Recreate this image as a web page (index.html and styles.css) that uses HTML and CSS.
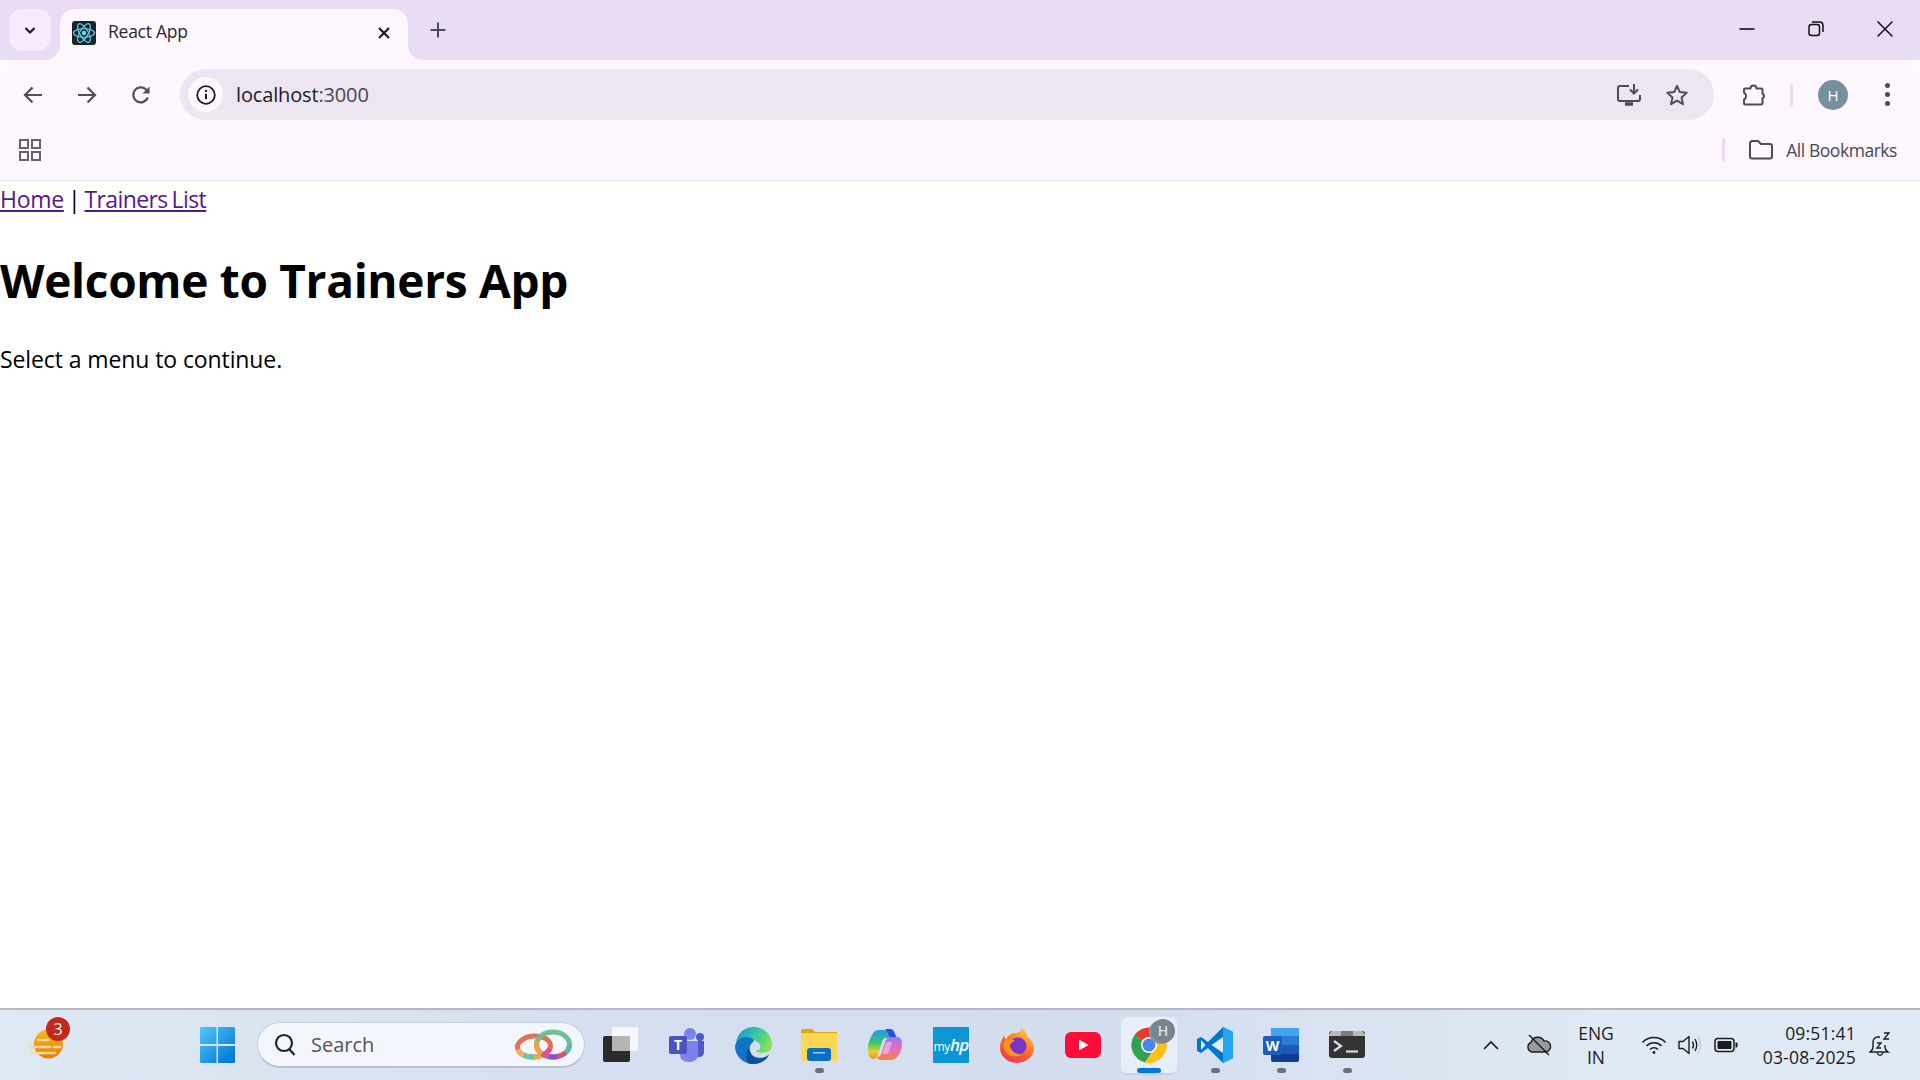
FILE: index.html
```html
<!DOCTYPE html>
<html lang="en">
<head>
    <meta charset="UTF-8">
    <title>React App</title>
    <link rel="stylesheet" href="styles.css">
</head>
<body>
    <div class="tabstrip">
        <div class="tab-menu">
            <svg width="14" height="14" viewBox="0 0 14 14"><path d="M2.5 5l4.5 4.5L11.500 5" fill="none" stroke="#1f1b24" stroke-width="2.200"/></svg>
        </div>
        <div class="tab">
            <svg class="favicon" width="24" height="24" viewBox="0 0 24 24">
                <rect width="24" height="24" rx="3" fill="#20232a"/>
                <circle cx="12" cy="12" r="2.200" fill="#61dafb"/>
                <g fill="none" stroke="#61dafb" stroke-width="1.100">
                    <ellipse cx="12" cy="12" rx="10.500" ry="4.200"/>
                    <ellipse cx="12" cy="12" rx="10.500" ry="4.200" transform="rotate(60 12 12)"/>
                    <ellipse cx="12" cy="12" rx="10.500" ry="4.200" transform="rotate(120 12 12)"/>
                </g>
            </svg>
            <span class="tab-title">React App</span>
            <svg class="tab-close" width="14" height="14" viewBox="0 0 14 14"><path d="M2 2l10 10M12 2L2 12" stroke="#1f1b24" stroke-width="2.200"/></svg>
        </div>
        <svg class="new-tab" width="18" height="18" viewBox="0 0 18 18"><path d="M9 1.500v15M1.500 9h15" stroke="#4f4a57" stroke-width="2"/></svg>
        <div class="win-controls">
            <svg width="16" height="16" viewBox="0 0 16 16"><path d="M0.500 8h15" stroke="#111" stroke-width="1.600"/></svg>
            <svg width="16" height="16" viewBox="0 0 16 16" fill="none" stroke="#111" stroke-width="1.500"><rect x="1" y="3.500" width="10.500" height="11" rx="2.500"/><path d="M4 1h7.500Q15 1 15 4.500V11"/></svg>
            <svg width="16" height="16" viewBox="0 0 16 16"><path d="M0.500 0.500l15 15M15.500 0.500l-15 15" stroke="#111" stroke-width="1.500"/></svg>
        </div>
    </div>

    <div class="chrome">
        <div class="toolbar">
            <svg class="nav-btn" width="20" height="20" viewBox="0 0 20 20"><path d="M19 10H2M9.500 2.500L2 10l7.500 7.500" fill="none" stroke="#544e5c" stroke-width="2.200"/></svg>
            <svg class="nav-btn" width="20" height="20" viewBox="0 0 20 20"><path d="M1 10h17M10.500 2.500L18 10l-7.500 7.500" fill="none" stroke="#544e5c" stroke-width="2.200"/></svg>
            <svg class="nav-btn" width="20" height="20" viewBox="0 0 20 20"><path d="M16.800 12.500A7.500 7.500 0 1 1 15 4.500L18 7" fill="none" stroke="#544e5c" stroke-width="2.200"/><path d="M18.500 1.500v7h-7z" fill="#544e5c"/></svg>
            <div class="omnibox">
                <div class="site-info">
                    <svg width="20" height="20" viewBox="0 0 20 20"><circle cx="10" cy="10" r="8.800" fill="none" stroke="#1f1b24" stroke-width="1.800"/><path d="M10 8.800v5.500" stroke="#1f1b24" stroke-width="2"/><circle cx="10" cy="5.900" r="1.200" fill="#1f1b24"/></svg>
                </div>
                <span class="url">localhost<span class="url-port">:3000</span></span>
                <svg class="omni-icon" width="26" height="24" viewBox="0 0 26 24" fill="none" stroke="#4f4a57" stroke-width="2"><path d="M13 3H4Q2 3 2 5v11q0 2 2 2h18q2 0 2-2v-4"/><path d="M18 1v9M14 6.500l4 4 4-4"/><path d="M9 21h8" stroke-width="3.500"/></svg>
                <svg class="omni-icon" width="24" height="24" viewBox="0 0 24 24"><path d="M12 2.800l2.800 6.300 6.900.7-5.200 4.600 1.500 6.800-6-3.500-6 3.500 1.500-6.800-5.200-4.600 6.900-.7z" fill="none" stroke="#4f4a57" stroke-width="2" stroke-linejoin="round"/></svg>
            </div>
            <svg class="ext-icon" width="24" height="24" viewBox="0 0 24 24"><path d="M3 5.500h5.500a3 3 0 0 1 6 0H19a1.500 1.500 0 0 1 1.500 1.500v4a2.200 2.200 0 0 1 0 4.200V20a1.500 1.500 0 0 1-1.500 1.500H3.500A1.500 1.500 0 0 1 2 20v-3.500a4 4 0 0 0 0-7V6.500A1 1 0 0 1 3 5.500z" fill="none" stroke="#4f4a57" stroke-width="2" stroke-linejoin="round"/></svg>
            <div class="bar-sep"></div>
            <div class="avatar">H</div>
            <div class="menu-dots"><i></i><i></i><i></i></div>
        </div>
        <div class="bookmarks">
            <svg class="apps-icon" width="22" height="22" viewBox="0 0 22 22" fill="none" stroke="#66616d" stroke-width="2"><rect x="1" y="1" width="8" height="8"/><rect x="13" y="1" width="8" height="8"/><rect x="1" y="13" width="8" height="8"/><rect x="13" y="13" width="8" height="8"/></svg>
            <div class="bar-sep"></div>
            <svg class="folder-icon" width="24" height="20" viewBox="0 0 24 20"><path d="M1 3.500Q1 1 3.500 1H9l3 3h9q2 0 2 2v10.500q0 2-2 2H3q-2 0-2-2z" fill="none" stroke="#4f4a57" stroke-width="2"/></svg>
            <span class="all-bookmarks">All Bookmarks</span>
        </div>
    </div>

    <main class="page">
        <nav><a href="#home">Home</a> | <a class="trainers-link" href="#trainers">Trainers List</a></nav>
        <h1>Welcome to Trainers App</h1>
        <p>Select a menu to continue.</p>
    </main>

    <footer class="taskbar">
        <div class="weather">
            <svg width="38" height="44" viewBox="0 0 38 44">
                <defs><linearGradient id="sun" x1="0" y1="0" x2="0" y2="1"><stop offset="0" stop-color="#fdbb1c"/><stop offset="1" stop-color="#ea7a06"/></linearGradient></defs>
                <circle cx="22.500" cy="21" r="14.500" fill="url(#sun)"/>
                <g stroke="#f2dba4" stroke-width="2.600" stroke-linecap="round"><path d="M12 17h10M5 24h19M28 24h6M5 30h24"/></g>
            </svg>
            <span class="weather-badge">3</span>
        </div>

        <div class="task-center">
            <svg class="start-icon" width="35" height="36" viewBox="0 0 35 36">
                <defs><linearGradient id="win" x1="0" y1="0" x2="1" y2="1"><stop offset="0" stop-color="#4cc9fb"/><stop offset="1" stop-color="#0071d2"/></linearGradient></defs>
                <path d="M1 0h15.500v17H0V1zM18 0h16l1 1v16H18zM0 19h16.500v17H1l-1-1zM18 19h17v16l-1 1H18z" fill="url(#win)"/>
            </svg>
            <div class="search-box">
                <svg width="22" height="24" viewBox="0 0 22 24" fill="none" stroke="#222" stroke-width="2.200"><circle cx="10" cy="10" r="8"/><path d="M15.500 16.500l5 5.500"/></svg>
                <span class="search-text">Search</span>
                <svg class="search-art" width="57" height="32" viewBox="0 0 57 32" fill="none" stroke-width="5">
                    <g transform="rotate(-4 19 17.500)">
                        <ellipse cx="19" cy="17.500" rx="16.500" ry="10.500" stroke="#dd7458"/>
                        <ellipse cx="19" cy="17.500" rx="16.500" ry="10.500" pathLength="100" stroke="#e44f9c" stroke-dasharray="12 100" stroke-dashoffset="-4"/>
                        <ellipse cx="19" cy="17.500" rx="16.500" ry="10.500" pathLength="100" stroke="#f5a74d" stroke-dasharray="10 100" stroke-dashoffset="-16"/>
                        <ellipse cx="19" cy="17.500" rx="16.500" ry="10.500" pathLength="100" stroke="#5cc9b0" stroke-dasharray="12 100" stroke-dashoffset="-26"/>
                        <ellipse cx="19" cy="17.500" rx="16.500" ry="10.500" pathLength="100" stroke="#e4b85a" stroke-dasharray="10 100" stroke-dashoffset="-38"/>
                    </g>
                    <ellipse cx="38" cy="15.500" rx="16.500" ry="12.500" stroke="#6fbf9a"/>
                    <ellipse cx="38" cy="15.500" rx="16.500" ry="12.500" pathLength="100" stroke="#54bdae" stroke-dasharray="10 100" stroke-dashoffset="0"/>
                    <ellipse cx="38" cy="15.500" rx="16.500" ry="12.500" pathLength="100" stroke="#d8546a" stroke-dasharray="10 100" stroke-dashoffset="-10"/>
                    <ellipse cx="38" cy="15.500" rx="16.500" ry="12.500" pathLength="100" stroke="#8a4fd0" stroke-dasharray="10 100" stroke-dashoffset="-20"/>
                    <ellipse cx="38" cy="15.500" rx="16.500" ry="12.500" pathLength="100" stroke="#e44f9c" stroke-dasharray="8 100" stroke-dashoffset="-30"/>
                    <ellipse cx="38" cy="15.500" rx="16.500" ry="12.500" pathLength="100" stroke="#f2a044" stroke-dasharray="16 100" stroke-dashoffset="-38"/>
                </svg>
            </div>
            <div class="task-item">
                <svg width="36" height="36" viewBox="0 0 36 36"><rect x="0" y="9" width="27" height="26" rx="2" fill="#2a2a2a"/><rect x="9" y="0" width="26" height="24" rx="1" fill="#f6f7fa"/><rect x="9" y="9" width="18" height="15" fill="#b4b4b4"/></svg>
            </div>
            <div class="task-item">
                <svg width="36" height="34" viewBox="0 0 36 34">
                    <circle cx="21" cy="6" r="6" fill="#7b83eb"/><circle cx="31" cy="9" r="4" fill="#5059c9"/>
                    <path d="M25 13h10v11q0 5-5 5h-5z" fill="#5059c9"/>
                    <path d="M11 13h18v13q0 8-9 8t-9-8z" fill="#7b83eb"/>
                    <rect x="0" y="8" width="18" height="18" rx="2" fill="#4b53bc"/>
                    <text x="9" y="22" class="svg-letter" font-size="14" fill="#fff" text-anchor="middle">T</text>
                </svg>
            </div>
            <div class="task-item">
                <svg width="37" height="37" viewBox="0 0 36 36">
                    <defs><linearGradient id="edge" x1="0" y1="0" x2="1" y2="0.400"><stop offset="0" stop-color="#1a8fd0"/><stop offset="0.500" stop-color="#2fc0b0"/><stop offset="1" stop-color="#7fe05a"/></linearGradient></defs>
                    <path d="M1 15C3 5 10 0 18 0c11 0 18 8 18 17 0 5-4 8-9 8-3 0-6-1-7-2 4 0 6-3 4-6-3-5-12-7-18-5-2 1-4 2-5 3z" fill="url(#edge)"/>
                    <path d="M0 19c1-6 6-10 12-9 6 1 8 3 5 5-4 3-4 11 2 14 5 2 10 1 14-2-3 6-9 9-15 9C8 36 0 28 0 19z" fill="#0f74c8"/>
                    <path d="M14 20c0 6 4 11 10 11 4 0 7-2 9-4-3 6-9 9-15 9-2 0-4 0-6-1-2-5-1-11 2-15z" fill="#0c4f96"/>
                </svg>
            </div>
            <div class="task-item running">
                <svg width="36" height="32" viewBox="0 0 36 32">
                    <path d="M0 1.500Q0 0 1.500 0H11l3 3h22v5H0z" fill="#e0a50c"/>
                    <rect y="4" width="36" height="28" fill="#fed755"/>
                    <rect x="6" y="19" width="24" height="13" rx="3" fill="#0a6fc4"/>
                    <rect x="12" y="23" width="12" height="1.500" fill="#9fd0f5"/>
                </svg>
            </div>
            <div class="task-item">
                <svg width="34" height="32" viewBox="0 0 34 32">
                    <defs>
                        <linearGradient id="cop1" x1="0" y1="0" x2="0" y2="1"><stop offset="0" stop-color="#1f9cf0"/><stop offset="0.450" stop-color="#3fc56b"/><stop offset="0.750" stop-color="#e9d02c"/><stop offset="1" stop-color="#f28a2e"/></linearGradient>
                        <linearGradient id="cop2" x1="0" y1="0" x2="0" y2="1"><stop offset="0" stop-color="#9a78ec"/><stop offset="0.500" stop-color="#e46cc4"/><stop offset="1" stop-color="#f6833e"/></linearGradient>
                    </defs>
                    <path d="M10 1h11q3 0 4 4l1 4h-8q-3 0-4 4l-4 13q-1 4-5 4-5-1-5-10 0-6 2-10l3-6q2-3 5-3z" fill="url(#cop1)"/>
                    <path d="M18 0h5q3 1 4 5l2 4h-7l-2-5q-1-2-3-3z" fill="#2a52d8"/>
                    <path d="M22 8h8q4 1 4 6 0 6-2 10l-3 4q-2 3-5 3H13q-3 0-4-3 3 0 4-3l4-12q1-4 5-5z" fill="url(#cop2)"/>
                    <path d="M18 13h6l-4 12h-6z" fill="#f3e8f6" opacity="0.450"/>
                </svg>
            </div>
            <div class="task-item">
                <div class="myhp">my<em>hp</em></div>
            </div>
            <div class="task-item">
                <svg width="34" height="36" viewBox="0 0 34 36">
                    <defs><linearGradient id="fox" x1="0.800" y1="0" x2="0.200" y2="1"><stop offset="0" stop-color="#ffd53c"/><stop offset="0.500" stop-color="#ff6a2a"/><stop offset="1" stop-color="#e8355c"/></linearGradient></defs>
                    <path d="M22 1c5 4 5 7 6 9 5 4 6 8 6 11a17 15 0 0 1-34 0c0-5 2-9 4-13 0 2 1 3 2 4 2-3 4-5 7-6 5 0 8-1 9-5z" fill="url(#fox)"/>
                    <circle cx="18" cy="19" r="8.500" fill="#7b34c9"/>
                    <path d="M5 13c4-2 8-1 10 1-3 1-4 2-5 4 0 5 5 10 12 9-5 4-14 3-17-3-2-4-2-8 0-11z" fill="#ff921f"/>
                </svg>
            </div>
            <div class="task-item">
                <svg width="36" height="26" viewBox="0 0 36 26"><rect width="36" height="26" rx="6" fill="#fc0d39"/><path d="M14 7.500v11l9.500-5.500z" fill="#fff"/></svg>
            </div>
            <div class="task-item active">
                <svg width="36" height="36" viewBox="0 0 36 36">
                    <path d="M18 18L3.500 8A18 18 0 0 1 34 10H18z" fill="#e33b2e"/>
                    <path d="M18 18l-14.500-10A18 18 0 0 0 14 35.600L23 22z" fill="#2fa14f"/>
                    <path d="M18 10h16a18 18 0 0 1-20 25.600L23 22z" fill="#fbc116"/>
                    <circle cx="18" cy="18" r="8" fill="#fff"/><circle cx="18" cy="18" r="6.500" fill="#4a85ec"/>
                </svg>
                <span class="chrome-badge">H</span>
            </div>
            <div class="task-item running">
                <svg width="36" height="36" viewBox="0 0 36 36">
                    <path d="M26 0l10 5v26l-10 5-15-15-7 5-4-2V12l4-2 7 5z" fill="#0078c8"/>
                    <path d="M26 0l10 5v26l-10 5z" fill="#20a6ef"/>
                    <path d="M26 10L14.500 18 26 26z" fill="#e4edf6"/>
                    <path d="M4 13v10l4.500-5z" fill="#e4edf6"/>
                </svg>
            </div>
            <div class="task-item running">
                <svg width="36" height="34" viewBox="0 0 36 34">
                    <rect x="8" y="0" width="28" height="9" fill="#41a5ee"/><rect x="8" y="8" width="28" height="9" fill="#2b7cd3"/>
                    <rect x="8" y="17" width="28" height="9" fill="#185abd"/><path d="M8 26h28v6q0 2-2 2H10q-2 0-2-2z" fill="#103f91"/>
                    <rect y="8" width="19" height="19" rx="2" fill="#1b5ebe"/>
                    <text x="9.500" y="23" class="svg-letter" font-size="14" fill="#fff" text-anchor="middle">W</text>
                </svg>
            </div>
            <div class="task-item running">
                <svg width="36" height="28" viewBox="0 0 36 28">
                    <rect width="36" height="27" rx="3" fill="#333"/>
                    <path d="M3 0h9v5H0V3zM24 0h9l3 3v2H24z" fill="#b8b8b8"/><path d="M12 0h12v5H12z" fill="#7c7c7c"/>
                    <path d="M5 10l7 5-7 5" fill="none" stroke="#ddd" stroke-width="2.200"/>
                    <path d="M17 20.500h12" stroke="#ddd" stroke-width="2.200"/>
                </svg>
            </div>
        </div>

        <div class="tray">
            <svg class="tray-chevron" width="16" height="10" viewBox="0 0 16 10"><path d="M1 9l7-7 7 7" fill="none" stroke="#1c1c1c" stroke-width="1.600"/></svg>
            <svg class="tray-cloud" width="26" height="22" viewBox="0 0 26 22"><path d="M6 18a5 5 0 0 1-1-9.500 7 7 0 0 1 13-1.500 5.500 5.500 0 0 1 2 11z" fill="#9b9b9b" stroke="#1c1c1c" stroke-width="1.400"/><path d="M3 1l20 20" stroke="#1c1c1c" stroke-width="1.400"/></svg>
            <div class="lang">ENG<br>IN</div>
            <svg class="tray-wifi" width="26" height="20" viewBox="0 0 26 20" fill="none" stroke="#1c1c1c" stroke-width="1.500"><path d="M1.500 7.500a16 16 0 0 1 23 0M5.500 11a10.500 10.500 0 0 1 15 0M9 14.500a5.500 5.500 0 0 1 8 0"/><circle cx="13" cy="17.500" r="1.400" fill="#1c1c1c" stroke="none"/></svg>
            <svg class="tray-volume" width="24" height="22" viewBox="0 0 24 22" fill="none" stroke="#1c1c1c" stroke-width="1.400"><path d="M1 7.500v7h4l6 5V2.500l-6 5z" stroke-linejoin="round"/><path d="M14.500 7.500q2 3.500 0 7M17 5q3.500 6 0 12"/><path d="M20 2.500q5 8.500 0 17" stroke="#c4c8cf"/></svg>
            <svg class="tray-battery" width="24" height="16" viewBox="0 0 24 16"><rect x="1" y="1.500" width="19" height="13" rx="3" fill="none" stroke="#1c1c1c" stroke-width="1.500"/><rect x="3.500" y="4" width="14" height="8" rx="1" fill="#1c1c1c"/><path d="M21.500 5.500h1q1 0 1 1v3q0 1-1 1h-1z" fill="#1c1c1c"/></svg>
            <div class="clock">09:51:41<br>03-08-2025</div>
            <svg class="tray-bell" width="22" height="26" viewBox="0 0 22 26" fill="none" stroke="#1c1c1c" stroke-width="1.400"><path d="M11 5H9Q4 5 4 11v4q0 3-3 5h18q-3-2-3-5v-2"/><path d="M8 21q3 5 6 0"/><path d="M8 11h4l-4 5h4M15 1h5l-5 6h5" stroke-width="1.300"/></svg>
        </div>
    </footer>
</body>
</html>
```

FILE: styles.css
```css
* {
    box-sizing: border-box;
}
html, body {
    height: 100%;
}
body {
    margin: 0;
    display: flex;
    flex-direction: column;
    background: #fff;
    overflow: hidden;
    font-family: "Open Sans", "Noto Sans", sans-serif;
}

/* tab strip */
.tabstrip {
    height: 60px;
    flex: none;
    display: flex;
    align-items: flex-start;
    background: #e9ddf6;
    padding: 9px 0 0 9px;
}
.tab-menu {
    width: 42px;
    height: 42px;
    border-radius: 13px;
    background: #f6ecfe;
    display: flex;
    align-items: center;
    justify-content: center;
    margin-right: 9px;
}
.tab {
    position: relative;
    width: 348px;
    height: 51px;
    background: #fef7ff;
    border-radius: 15px 15px 0 0;
    display: flex;
    align-items: center;
    padding: 0 17px 0 12px;
    margin-bottom: -1px;
}
.tab::before, .tab::after {
    content: "";
    position: absolute;
    bottom: 0;
    width: 14px;
    height: 14px;
    background: radial-gradient(circle at 0 0, #e9ddf6 13.500px, #fef7ff 14px);
}
.tab::before {
    left: -14px;
}
.tab::after {
    right: -14px;
    transform: scaleX(-1);
}
.favicon {
    margin-top: -4px;
}
.tab-title {
    margin: -7px 0 0 12px;
    font-size: 17.500px;
    color: #2a2630;
    flex: 1;
    letter-spacing: -0.250px;
}
.tab-close {
    margin-top: -4px;
}
.new-tab {
    margin: 12px 0 0 21px;
}
.win-controls {
    margin-left: auto;
    display: flex;
    gap: 53px;
    padding: 12px 27px 0 0;
}

/* toolbar + bookmarks */
.chrome {
    flex: none;
    height: 121px;
    background: #fef7ff;
    border-radius: 12px 12px 0 0;
    border-bottom: 1px solid #e8e3ec;
    position: relative;
}
.toolbar {
    height: 60px;
    padding-top: 9px;
    display: flex;
    align-items: center;
}
.nav-btn {
    flex: none;
    margin-left: 23px;
    margin-right: 11px;
}
.omnibox {
    flex: none;
    width: 1534px;
    height: 51px;
    margin-left: 18px;
    border-radius: 26px;
    background: #ece6f0;
    display: flex;
    align-items: center;
    padding-left: 8px;
}
.site-info {
    width: 35px;
    height: 35px;
    border-radius: 50%;
    background: #fef7ff;
    display: flex;
    align-items: center;
    justify-content: center;
}
.url {
    margin-left: 13px;
    font-size: 20px;
    color: #1f1b24;
    flex: 1;
    letter-spacing: -0.150px;
}
.url-port {
    color: #4a4653;
}
.omni-icon {
    margin-right: 23px;
}
.omni-icon + .omni-icon {
    margin-right: 25px;
}
.ext-icon {
    margin-left: 28px;
}
.bar-sep {
    width: 3px;
    height: 24px;
    border-radius: 2px;
    background: #e9ddf6;
}
.toolbar .bar-sep {
    margin-left: 24px;
}
.avatar {
    width: 30px;
    height: 30px;
    margin-left: 25px;
    border-radius: 50%;
    background: #76909e;
    color: #fff;
    font-size: 15px;
    display: flex;
    align-items: center;
    justify-content: center;
}
.menu-dots {
    margin-left: 37px;
    display: flex;
    flex-direction: column;
    gap: 4px;
}
.menu-dots i {
    width: 5px;
    height: 5px;
    border-radius: 50%;
    background: #4f4a57;
}
.bookmarks {
    height: 60px;
    display: flex;
    align-items: center;
    padding-left: 19px;
}
.apps-icon {
    margin-right: auto;
}
.folder-icon {
    margin-left: 24px;
}
.all-bookmarks {
    margin: 0 23px 0 13px;
    font-size: 17.500px;
    color: #4a4653;
    letter-spacing: -0.450px;
}

/* page content */
.page {
    flex: 1;
    padding-top: 2px;
    font-size: 23px;
    line-height: 32px;
    color: #000;
    overflow: hidden;
}
.page a {
    color: #551a8b;
}
.page nav {
    letter-spacing: -0.300px;
    word-spacing: -1.500px;
}
.page nav .trainers-link {
    letter-spacing: -0.600px;
}
.page h1 {
    font-size: 46px;
    line-height: 64px;
    margin: 33px 0 31px;
    letter-spacing: -0.300px;
}
.page p {
    margin: 0;
    letter-spacing: -0.100px;
}

/* taskbar */
.taskbar {
    flex: none;
    height: 72px;
    border-top: 2px solid #b5b8bd;
    background: linear-gradient(90deg, #dfe9f3 0%, #d5dff0 30%, #d5deef 60%, #dfeaf4 85%, #dfeaf4 100%);
    display: flex;
    align-items: center;
    position: relative;
}
.weather {
    position: relative;
    width: 38px;
    height: 44px;
    margin-left: 26px;
}
.weather-badge {
    position: absolute;
    top: -6px;
    right: -6px;
    width: 24px;
    height: 24px;
    border-radius: 50%;
    background: #c4281b;
    color: #fff;
    font-size: 16px;
    line-height: 24px;
    text-align: center;
}
.task-center {
    margin-left: 136px;
    display: flex;
    align-items: center;
}
.start-icon {
    flex: none;
}
.search-box {
    flex: none;
    width: 328px;
    height: 46px;
    margin: 0 3px 0 22px;
    border-radius: 23px;
    background: #f3f6fc;
    border: 1px solid #c6cddb;
    border-bottom: 2px solid #b9c0d0;
    display: flex;
    align-items: center;
    padding: 0 12px 0 16px;
}
.search-text {
    flex: 1;
    margin-left: 15px;
    font-size: 20px;
    color: #555;
}
.task-item {
    position: relative;
    flex: none;
    width: 66px;
    height: 56px;
    display: flex;
    align-items: center;
    justify-content: center;
}
.task-item.running::after, .task-item.active::after {
    content: "";
    position: absolute;
    bottom: 0;
    left: 29px;
    width: 9px;
    height: 5px;
    border-radius: 3px;
    background: #6e7278;
}
.task-item.active::before {
    content: "";
    position: absolute;
    top: 0;
    left: 5px;
    width: 56px;
    height: 56px;
    border-radius: 6px;
    background: #e9edf7;
    border-bottom: 2px solid #c9cfdc;
}
.task-item.active svg {
    position: relative;
}
.task-item.active::after {
    left: 21px;
    width: 24px;
    background: #0078d4;
}
.chrome-badge {
    position: absolute;
    top: 2px;
    right: 7px;
    width: 24px;
    height: 24px;
    border-radius: 50%;
    background: #76858f;
    box-shadow: -2px 1px 0 #8a949c;
    color: #dfe4e8;
    font-size: 14px;
    font-weight: 600;
    line-height: 24px;
    text-align: center;
}
.myhp {
    width: 36px;
    height: 36px;
    border-radius: 1px;
    background: #0d96d6;
    color: #fff;
    font-size: 12px;
    line-height: 36px;
    text-align: center;
    letter-spacing: -0.300px;
    white-space: nowrap;
}
.myhp em {
    font-weight: 600;
    font-size: 17px;
    letter-spacing: -0.800px;
}
.svg-letter {
    font-family: "Open Sans", sans-serif;
    font-weight: 700;
}
.tray {
    position: absolute;
    right: 0;
    top: 0;
    bottom: 0;
    width: 479px;
    display: flex;
    align-items: center;
    color: #1c1c1c;
    font-size: 17.500px;
    line-height: 24px;
}
.tray-chevron {
    margin-left: 42px;
}
.tray-cloud {
    margin-left: 27px;
}
.lang {
    width: 60px;
    margin-left: 14px;
    text-align: center;
}
.tray-wifi {
    margin-left: 15px;
}
.tray-volume {
    margin-left: 11px;
}
.tray-battery {
    margin-left: 12px;
}
.clock {
    margin-left: 6px;
    width: 112px;
    text-align: right;
    letter-spacing: 0.200px;
}
.tray-bell {
    margin-left: 13px;
}
```
